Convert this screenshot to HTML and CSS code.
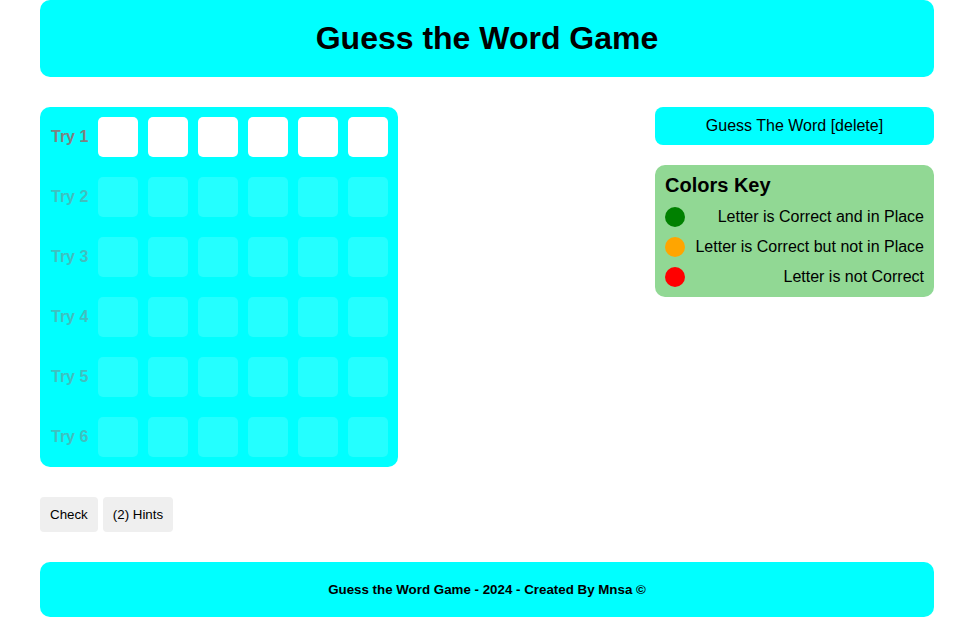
FILE: index.html
```html
<!DOCTYPE html>
<html lang="en">
<head>
<meta charset="UTF-8">
<title>Guess the Word Game</title>
<link rel="stylesheet" href="styles.css">
</head>
<body>
<div class="page">
  <header class="header"><h1>Guess the Word Game</h1></header>
  <main class="main">
    <div class="left">
      <div class="board">
        <div class="row"><span class="label">Try 1</span><span class="cell"></span><span class="cell"></span><span class="cell"></span><span class="cell"></span><span class="cell"></span><span class="cell"></span></div>
        <div class="row off"><span class="label">Try 2</span><span class="cell"></span><span class="cell"></span><span class="cell"></span><span class="cell"></span><span class="cell"></span><span class="cell"></span></div>
        <div class="row off"><span class="label">Try 3</span><span class="cell"></span><span class="cell"></span><span class="cell"></span><span class="cell"></span><span class="cell"></span><span class="cell"></span></div>
        <div class="row off"><span class="label">Try 4</span><span class="cell"></span><span class="cell"></span><span class="cell"></span><span class="cell"></span><span class="cell"></span><span class="cell"></span></div>
        <div class="row off"><span class="label">Try 5</span><span class="cell"></span><span class="cell"></span><span class="cell"></span><span class="cell"></span><span class="cell"></span><span class="cell"></span></div>
        <div class="row off"><span class="label">Try 6</span><span class="cell"></span><span class="cell"></span><span class="cell"></span><span class="cell"></span><span class="cell"></span><span class="cell"></span></div>
      </div>
      <div class="controls">
        <button class="btn">Check</button>
        <button class="btn">(2) Hints</button>
      </div>
    </div>
    <aside class="side">
      <div class="guess">Guess The Word [delete]</div>
      <div class="key">
        <h2>Colors Key</h2>
        <div class="key-row"><span class="dot green"></span><span>Letter is Correct and in Place</span></div>
        <div class="key-row"><span class="dot orange"></span><span>Letter is Correct but not in Place</span></div>
        <div class="key-row"><span class="dot red"></span><span>Letter is not Correct</span></div>
      </div>
    </aside>
  </main>
  <footer class="footer">Guess the Word Game - 2024 - Created By Mnsa ©</footer>
</div>
</body>
</html>
```

FILE: styles.css
```css
* { box-sizing: border-box; }
html, body { margin: 0; padding: 0; }
body {
  font-family: "Liberation Sans", Arial, sans-serif;
  background: #fff;
  color: #000;
}
.page {
  width: 894px;
  margin: 0 auto;
}
.header {
  background: #00ffff;
  border-radius: 10px;
  height: 77px;
  display: flex;
  align-items: center;
  justify-content: center;
}
.header h1 {
  margin: 0;
  font-size: 32px;
  font-weight: bold;
}
.main {
  display: flex;
  justify-content: space-between;
  margin-top: 30px;
}
.board {
  width: 358px;
  background: #00ffff;
  border-radius: 10px;
  padding: 10px;
  display: flex;
  flex-direction: column;
  gap: 20px;
}
.row {
  display: flex;
  align-items: center;
  gap: 10px;
}
.label {
  width: 38px;
  padding-left: 1px;
  font-size: 16px;
  font-weight: bold;
  color: #808080;
  white-space: nowrap;
}
.cell {
  width: 40px;
  height: 40px;
  background: #fff;
  border-radius: 5px;
}
.row.off .label { color: #40bfbf; }
.row.off .cell { background: #24ffff; }
.controls {
  margin-top: 30px;
  display: flex;
  gap: 5px;
}
.btn {
  font-family: "Liberation Sans", Arial, sans-serif;
  font-size: 13.33px;
  line-height: 15px;
  padding: 10px;
  border: none;
  background: #efefef;
  border-radius: 4px;
  color: #000;
}
.side {
  width: 279px;
  display: flex;
  flex-direction: column;
  gap: 20px;
}
.guess {
  background: #00ffff;
  border-radius: 8px;
  height: 38px;
  display: flex;
  align-items: center;
  justify-content: center;
  font-size: 16px;
}
.key {
  background: #91d894;
  border-radius: 10px;
  padding: 9px 10px 10px;
  display: flex;
  flex-direction: column;
  gap: 10px;
}
.key h2 {
  margin: 0;
  font-size: 20px;
  line-height: 23px;
  font-weight: bold;
}
.key-row {
  display: flex;
  align-items: center;
  justify-content: space-between;
  font-size: 16px;
  height: 20px;
}
.dot {
  width: 20px;
  height: 20px;
  border-radius: 50%;
  flex: none;
}
.green { background: #008000; }
.orange { background: #ffa500; }
.red { background: #ff0000; }
.footer {
  margin-top: 30px;
  background: #00ffff;
  border-radius: 10px;
  height: 55px;
  display: flex;
  align-items: center;
  justify-content: center;
  font-size: 13.33px;
  font-weight: bold;
}
```
